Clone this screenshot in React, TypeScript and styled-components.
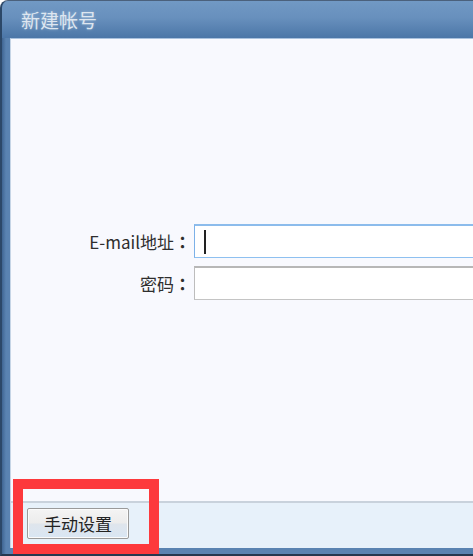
import React from "react";
import styled, { createGlobalStyle } from "styled-components";

const Global = createGlobalStyle`
  html, body { margin: 0; padding: 0; background: #ffffff; }
  body { width: 473px; height: 556px; overflow: hidden; font-family: "Noto Sans CJK SC", "Noto Sans", sans-serif; }
  #root { width: 473px; height: 556px; }
`;

const Window = styled.div`
  position: relative;
  width: 473px;
  height: 556px;
  box-sizing: border-box;
  display: flex;
  flex-direction: column;
  background: linear-gradient(90deg, #3f6592 0px, #5a83b1 4px, #5a83b1 100%);
  border-top: 1px solid #4b617c;
  border-left: 2px solid #2c4868;
  border-bottom: 2px solid #25384f;
  border-top-left-radius: 8px;
  overflow: hidden;
`;

const TitleBar = styled.div`
  height: 37px;
  flex: none;
  display: flex;
  align-items: center;
  padding-left: 21px;
  margin-left: -2px;
  background: linear-gradient(180deg, #7199c4 0%, #6890bd 45%, #4b76a7 100%);
  color: #dde6f0;
  font-size: 19px;
  text-shadow: 0 0 3px rgba(255, 255, 255, 0.35);
`;

const Main = styled.div`
  flex: 1;
  display: flex;
  flex-direction: column;
  margin-left: 8px;
  margin-bottom: 6px;
  border-top: 1px solid #a9c1dd;
  border-left: 1px solid #c6d5e6;
  min-height: 0;
`;

const Content = styled.div`
  flex: 1;
  background: #f8f9fe;
  padding-top: 185px;
  box-sizing: border-box;
`;

const Form = styled.div`
  display: grid;
  grid-template-columns: 180px 320px;
  column-gap: 3px;
  row-gap: 8px;
  align-items: center;
`;

const Label = styled.div`
  text-align: right;
  font-size: 17px;
  color: #2e2e2e;
  white-space: nowrap;
`;

const Colon = styled.span`
  font-family: "Noto Sans CJK TC", "Noto Sans CJK SC", sans-serif;
  font-weight: 700;
`;

const InputBox = styled.div<{ $focused?: boolean }>`
  height: 34px;
  box-sizing: border-box;
  background: #ffffff;
  display: flex;
  align-items: center;
  padding-left: 9px;
  border: 1px solid ${(p) => (p.$focused ? "#7cb1e8" : "#bdbdbd")};
  border-top: 2px solid ${(p) => (p.$focused ? "#8cbcec" : "#b7b7b7")};
  border-bottom: 1px solid ${(p) => (p.$focused ? "#8ec0f0" : "#c4c4c4")};
`;

const Caret = styled.span`
  width: 2px;
  height: 24px;
  background: #222222;
`;

const Footer = styled.div`
  height: 47px;
  flex: none;
  box-sizing: border-box;
  border-top: 2px solid #c9d2dc;
  background: #e7f1fa;
  padding: 5px 0 0 16px;
`;

const Button = styled.button`
  width: 102px;
  height: 31px;
  box-sizing: border-box;
  border: 1px solid #9a9a9a;
  border-radius: 2px;
  background: linear-gradient(180deg, #f4f4f4 0%, #ececec 48%, #dfe5ec 52%, #d9e6f3 100%);
  box-shadow: inset 0 0 0 1px #fbfbfb;
  font-family: "Noto Sans CJK SC", "Noto Sans", sans-serif;
  font-size: 17px;
  color: #222222;
  padding: 0;
  line-height: 1;
`;

const Annotation = styled.div`
  position: absolute;
  left: 11px;
  top: 478px;
  width: 146px;
  height: 75px;
  box-sizing: border-box;
  border: 10px solid #fd393c;
  pointer-events: none;
`;

export default function App() {
  return (
    <>
      <Global />
      <Window>
        <TitleBar>新建帐号</TitleBar>
        <Main>
          <Content>
            <Form>
              <Label>
                E-mail地址<Colon>：</Colon>
              </Label>
              <InputBox $focused>
                <Caret />
              </InputBox>
              <Label>
                密码<Colon>：</Colon>
              </Label>
              <InputBox />
            </Form>
          </Content>
          <Footer>
            <Button>手动设置</Button>
          </Footer>
        </Main>
        <Annotation />
      </Window>
    </>
  );
}
